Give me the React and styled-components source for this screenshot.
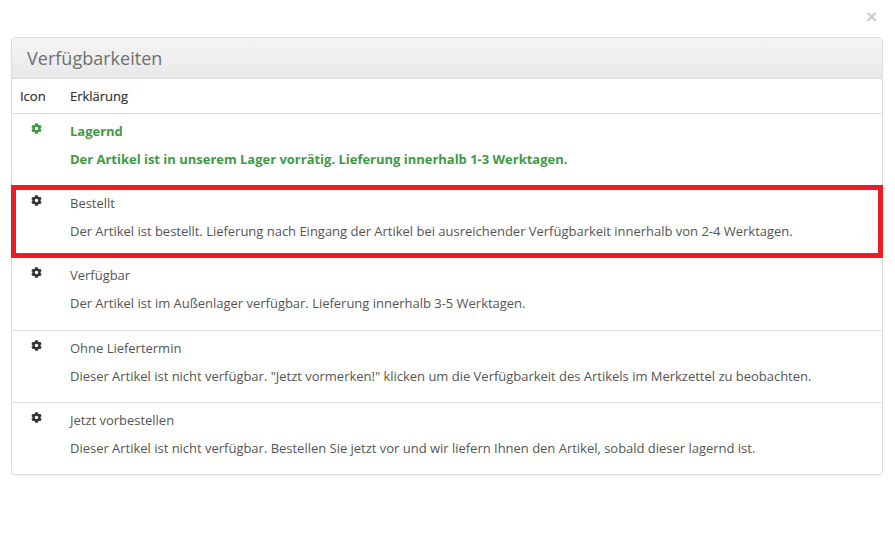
import React from 'react'
import styled, { createGlobalStyle } from 'styled-components'
import { FaCog } from 'react-icons/fa'

const rows = [
  {
    name: 'Lagernd',
    text: 'Der Artikel ist in unserem Lager vorrätig. Lieferung innerhalb 1-3 Werktagen.',
    height: 72,
    stock: true
  },
  {
    name: 'Bestellt',
    text: 'Der Artikel ist bestellt. Lieferung nach Eingang der Artikel bei ausreichender Verfügbarkeit innerhalb von 2-4 Werktagen.',
    height: 72,
    marked: true
  },
  {
    name: 'Verfügbar',
    text: 'Der Artikel ist im Außenlager verfügbar. Lieferung innerhalb 3-5 Werktagen.',
    height: 73
  },
  {
    name: 'Ohne Liefertermin',
    text: 'Dieser Artikel ist nicht verfügbar. "Jetzt vormerken!" klicken um die Verfügbarkeit des Artikels im Merkzettel zu beobachten.',
    height: 72
  },
  {
    name: 'Jetzt vorbestellen',
    text: 'Dieser Artikel ist nicht verfügbar. Bestellen Sie jetzt vor und wir liefern Ihnen den Artikel, sobald dieser lagernd ist.',
    height: 71
  }
]

function App () {
  return (
    <>
      <GlobalStyle />
      <Modal>
        <CloseRow>
          <Close>×</Close>
        </CloseRow>
        <Panel>
          <PanelHeading>Verfügbarkeiten</PanelHeading>
          <HeadRow>
            <HeadCell>Icon</HeadCell>
            <HeadCell>Erklärung</HeadCell>
          </HeadRow>
          {rows.map(row => (
            <Row key={row.name} $height={row.height} $stock={row.stock} $marked={row.marked}>
              <IconCell $stock={row.stock}>
                <FaCog />
              </IconCell>
              <TextCell>
                <Name>{row.name}</Name>
                <Description>{row.text}</Description>
              </TextCell>
            </Row>
          ))}
        </Panel>
      </Modal>
    </>
  )
}

export default App

const GlobalStyle = createGlobalStyle`
  body {
    margin: 0;
    background: #fff;
    font-family: "Open Sans", sans-serif;
    font-size: 13px;
    letter-spacing: -0.015px;
    color: #555;
  }
`

const Modal = styled.div`
  width: 895px;
  height: 534px;
  box-sizing: border-box;
  padding: 0 12px 0 11px;
`

const CloseRow = styled.div`
  display: flex;
  justify-content: flex-end;
  height: 37px;
  padding-top: 7px;
  box-sizing: border-box;
`

const Close = styled.span`
  font-family: "Liberation Sans", sans-serif;
  font-size: 19px;
  font-weight: 700;
  line-height: 20px;
  color: #ccc;
  margin-right: 6px;
`

const Panel = styled.div`
  border: 1px solid #ddd;
  border-radius: 4px;
  box-shadow: 0 1px 1px rgba(0, 0, 0, 0.05);
  background: #fff;
`

const PanelHeading = styled.div`
  height: 41px;
  box-sizing: border-box;
  padding: 0 15px;
  border-bottom: 1px solid #ddd;
  border-radius: 3px 3px 0 0;
  background: linear-gradient(to bottom, #f5f5f5, #e8e8e8);
  font-size: 18px;
  letter-spacing: 0.02px;
  line-height: 40px;
  color: #6f6f6f;
`

const HeadRow = styled.div`
  display: grid;
  grid-template-columns: 50px 1fr;
  height: 35px;
  box-sizing: border-box;
  border-bottom: 1px solid #ddd;
`

const HeadCell = styled.div`
  padding: 8px;
  line-height: 18px;
  font-weight: 500;
  -webkit-text-stroke: 0.2px #333;
  color: #333;
`

const Row = styled.div`
  position: relative;
  display: grid;
  grid-template-columns: 50px 1fr;
  height: ${props => props.$height}px;
  box-sizing: border-box;
  padding-top: 8px;
  border-bottom: 1px solid #ddd;
  color: ${props => (props.$stock ? '#3f9a45' : '#555')};
  font-weight: ${props => (props.$stock ? 700 : 400)};

  &:last-child {
    border-bottom: 0;
  }

  ${props => props.$marked && `
    &::after {
      content: '';
      position: absolute;
      top: -1px;
      left: -1px;
      right: -1px;
      bottom: -1px;
      border: 5px solid #ed1c24;
    }
  `}
`

const IconCell = styled.div`
  display: flex;
  justify-content: center;
  padding: 1px 1px 0 0;
  font-size: 11px;
  line-height: 1;
  color: ${props => (props.$stock ? 'inherit' : '#333')};
`

const TextCell = styled.div`
  padding: 0 8px;
`

const Name = styled.p`
  margin: 0 0 10px;
  line-height: 18px;
`

const Description = styled.p`
  margin: 0;
  line-height: 18px;
`
